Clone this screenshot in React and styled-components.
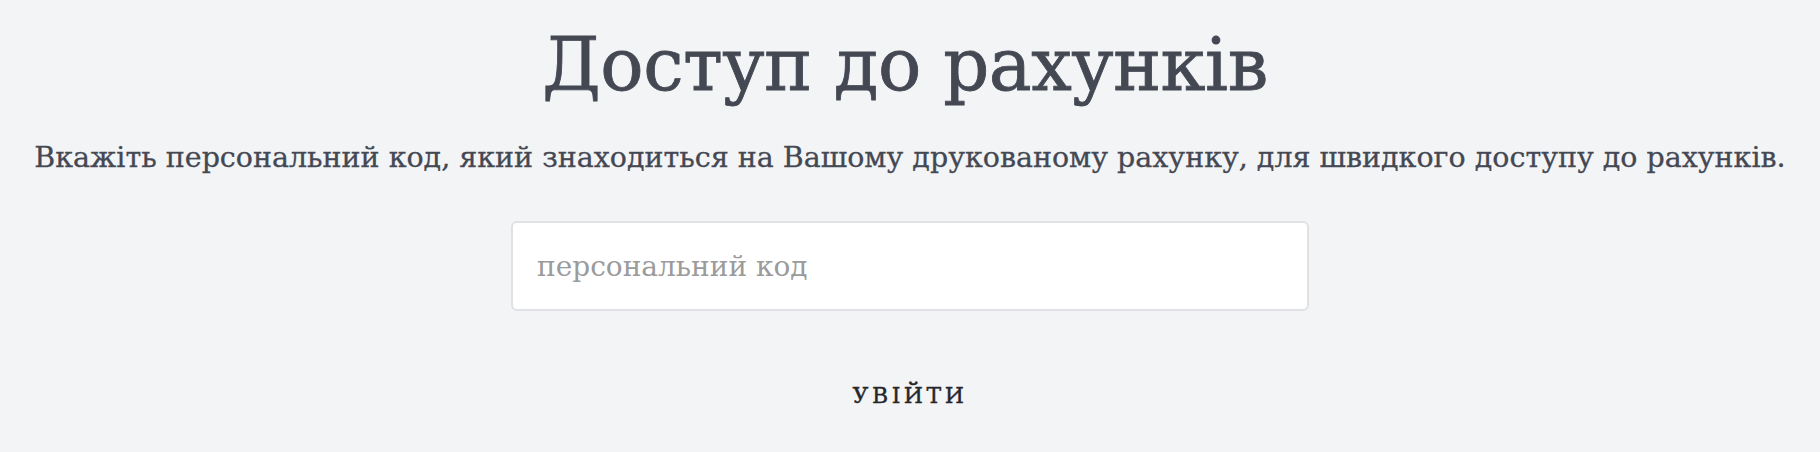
import React from "react";
import styled, { createGlobalStyle } from "styled-components";

const Global = createGlobalStyle`
  html, body { margin: 0; padding: 0; background: #f3f4f6; }
  body { font-family: "DejaVu Serif", "Liberation Serif", serif; }
  * { box-sizing: border-box; }
`;

const Page = styled.main`
  min-height: 452px;
  display: flex;
  flex-direction: column;
  align-items: center;
  padding-top: 22px;
  color: #444853;
`;

const Title = styled.h1`
  margin: 0 10px 0 0;
  font-size: 72px;
  line-height: 86px;
  font-weight: 400;
  letter-spacing: -0.5px;
  -webkit-text-stroke: 0.8px #444853;
`;

const Lead = styled.p`
  margin: 30px 0 0;
  font-size: 28.5px;
  line-height: 40px;
  font-weight: 400;
  white-space: nowrap;
  -webkit-text-stroke: 0.3px #444853;
`;

const Form = styled.form`
  display: flex;
  flex-direction: column;
  align-items: center;
  margin-top: 43px;
`;

const CodeInput = styled.input`
  width: 798px;
  height: 90px;
  padding: 0 24px;
  background: #fff;
  border: 2px solid #e0e1e5;
  border-radius: 6px;
  font-family: inherit;
  font-size: 28px;
  color: #444853;
  outline: none;
  &::placeholder { color: #9b9b9b; }
`;

const Submit = styled.button`
  margin-top: 72px;
  background: none;
  border: none;
  padding: 0;
  font-family: inherit;
  font-size: 22px;
  line-height: 26px;
  letter-spacing: 0.16em;
  color: #26272c;
  cursor: pointer;
  -webkit-text-stroke: 0.4px #26272c;
`;

export default function App() {
  return (
    <>
      <Global />
      <Page>
        <Title>Доступ до рахунків</Title>
        <Lead>
          Вкажіть персональний код, який знаходиться на Вашому друкованому рахунку, для швидкого доступу до рахунків.
        </Lead>
        <Form onSubmit={(e) => e.preventDefault()}>
          <CodeInput placeholder="персональний код" />
          <Submit type="submit">УВІЙТИ</Submit>
        </Form>
      </Page>
    </>
  );
}
